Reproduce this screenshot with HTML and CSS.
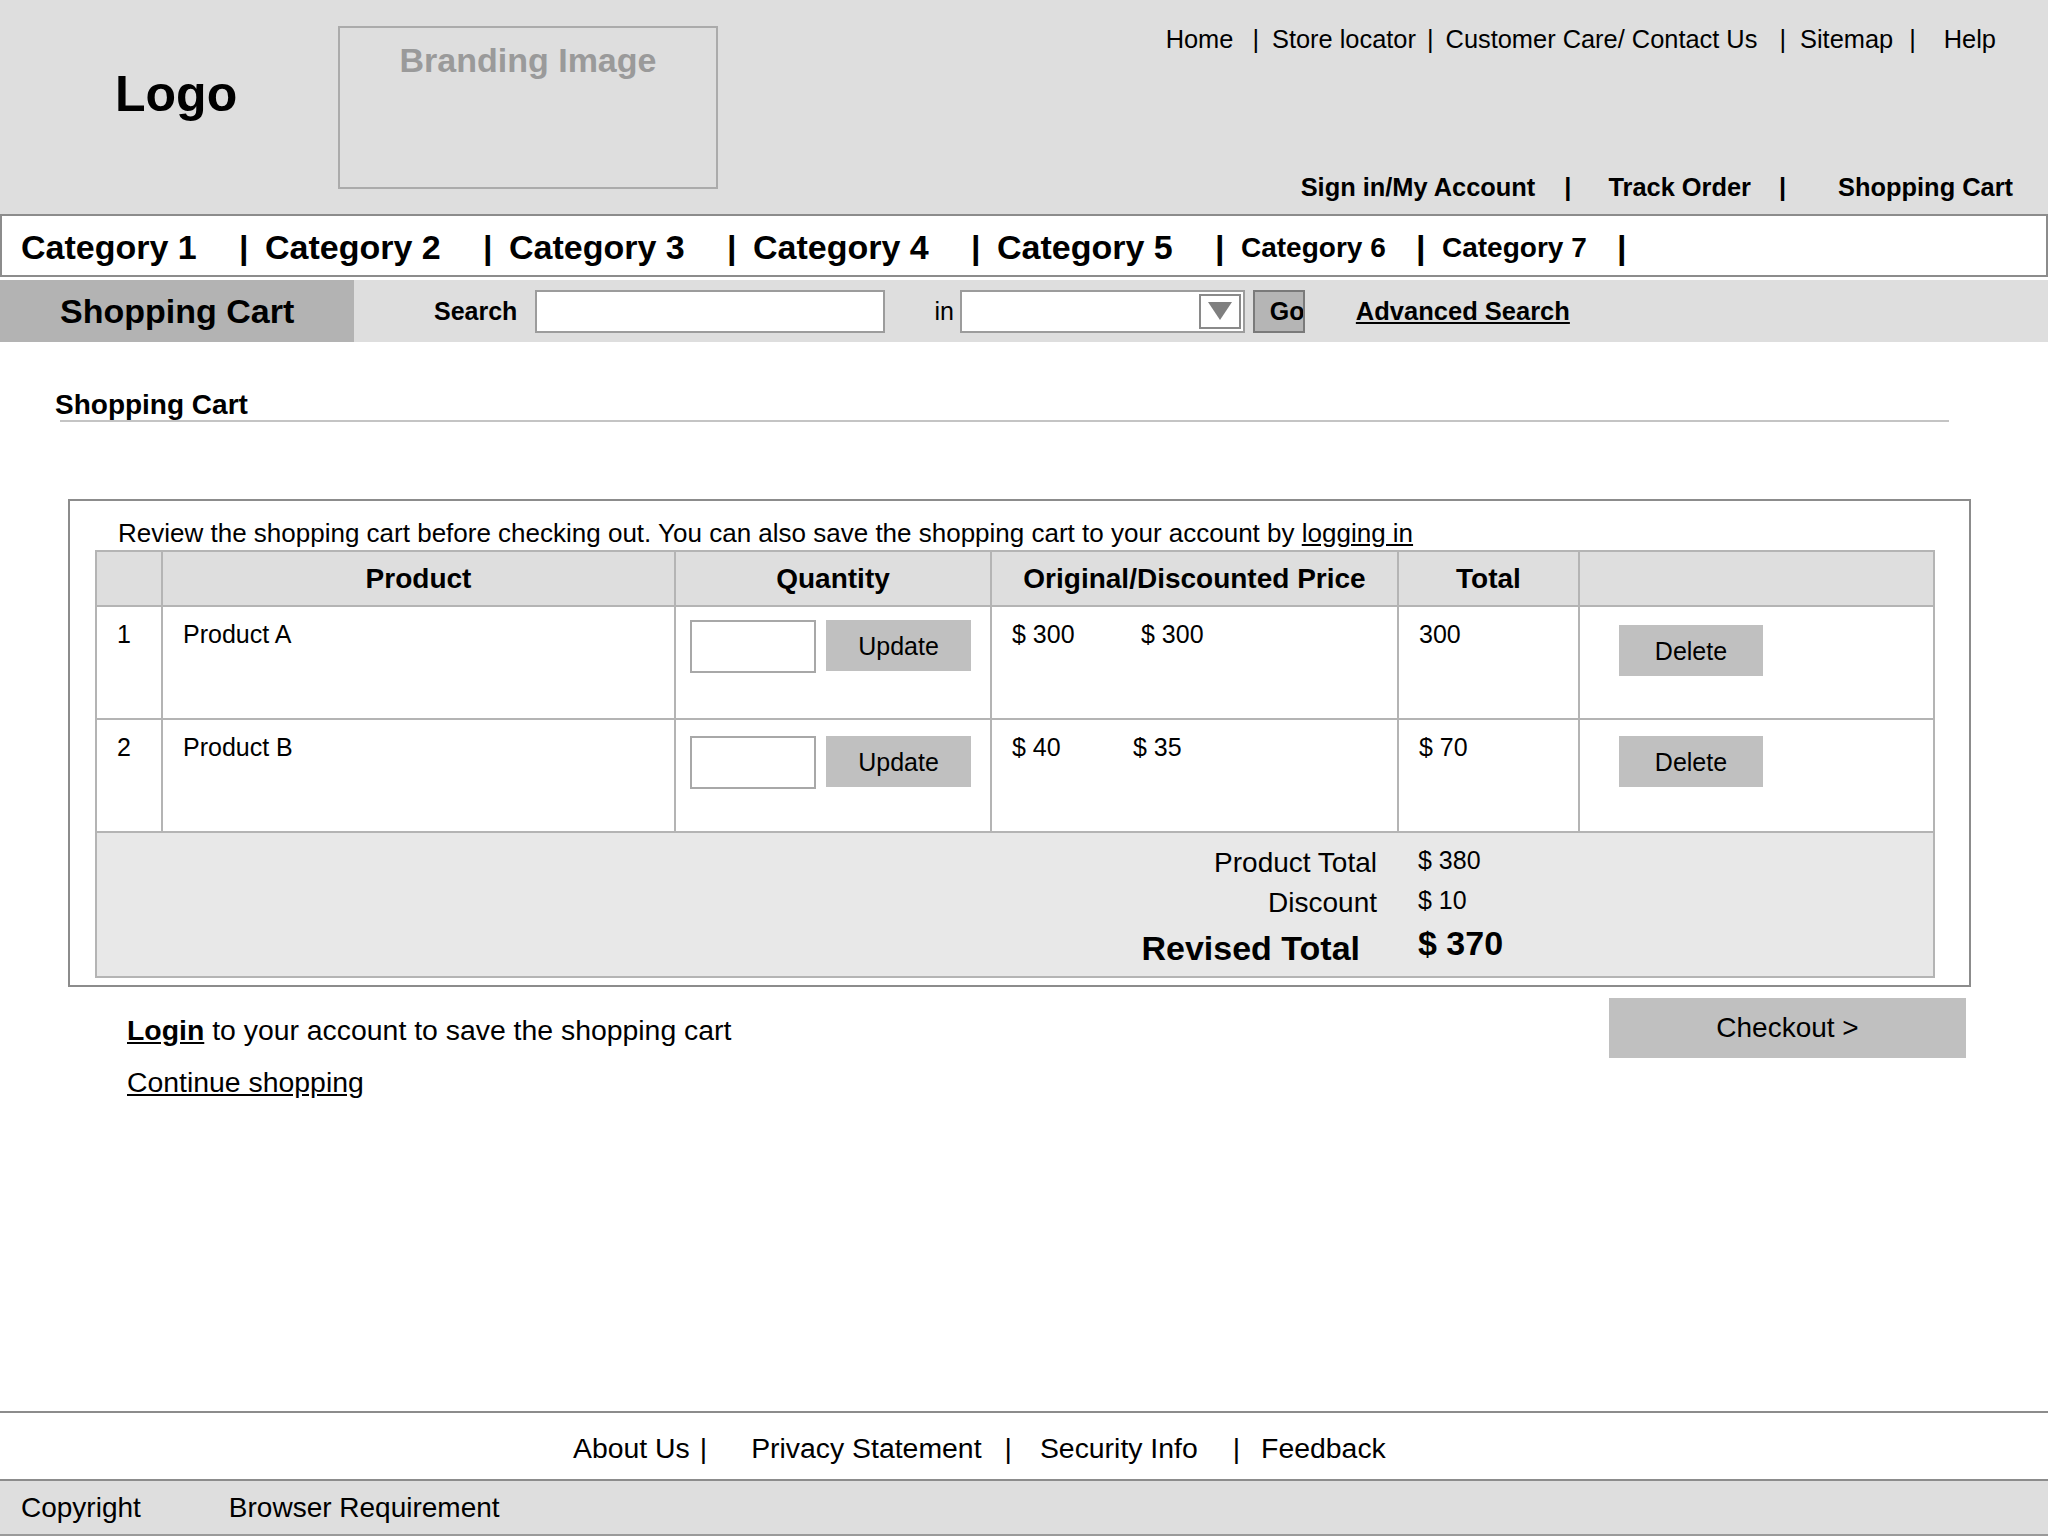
FILE: index.html
```html
<!DOCTYPE html>
<html lang="en">
<head>
<meta charset="utf-8">
<title>Shopping Cart</title>
<link rel="stylesheet" href="styles.css">
</head>
<body>
<div class="page">
  <header class="header">
    <div class="logo">Logo</div>
    <div class="brand">Branding Image</div>
    <div class="util">
      <nav class="toplinks">
        <a href="#">Home</a><span class="sep s1">|</span><a href="#">Store locator</a><span class="sep s2">|</span><a href="#">Customer Care/ Contact Us</a><span class="sep s3">|</span><a href="#">Sitemap</a><span class="sep s4">|</span><a href="#">Help</a>
      </nav>
      <nav class="acctlinks">
        <a href="#">Sign in/My Account</a><span class="asep">|</span><a href="#">Track Order</a><span class="asep last">|</span><a href="#">Shopping Cart</a>
      </nav>
    </div>
  </header>

  <nav class="cats">
    <a href="#" class="cat">Category 1</a><span class="csep">|</span>
    <a href="#" class="cat">Category 2</a><span class="csep">|</span>
    <a href="#" class="cat">Category 3</a><span class="csep">|</span>
    <a href="#" class="cat">Category 4</a><span class="csep">|</span>
    <a href="#" class="cat">Category 5</a><span class="csep">|</span>
    <a href="#" class="cat sm">Category 6</a><span class="csep">|</span>
    <a href="#" class="cat sm">Category 7</a><span class="csep">|</span>
  </nav>

  <div class="searchbar">
    <div class="tab">Shopping Cart</div>
    <span class="slabel">Search</span>
    <div class="sinput"></div>
    <span class="in">in</span>
    <div class="select">
      <span class="arrow"><svg width="26" height="20" viewBox="0 0 26 20"><polygon points="1,1 25,1 13,19" fill="#7f7f7f"/></svg></span>
    </div>
    <div class="go">Go</div>
    <a href="#" class="adv">Advanced Search</a>
  </div>

  <main class="content">
    <h2 class="title">Shopping Cart</h2>
    <div class="rule"></div>

    <section class="cartbox">
      <p class="intro">Review the shopping cart before checking out. You can also save the shopping cart to your account by <a href="#">logging in</a></p>
      <table class="cart">
        <colgroup>
          <col class="c0"><col class="c1"><col class="c2"><col class="c3"><col class="c4"><col class="c5">
        </colgroup>
        <thead>
          <tr>
            <th></th>
            <th>Product</th>
            <th>Quantity</th>
            <th>Original/Discounted Price</th>
            <th>Total</th>
            <th></th>
          </tr>
        </thead>
        <tbody>
          <tr class="item">
            <td>1</td>
            <td>Product A</td>
            <td class="qty"><div class="qtywrap"><div class="qinput"></div><div class="btn upd">Update</div></div></td>
            <td><span class="p1">$ 300</span><span>$ 300</span></td>
            <td>300</td>
            <td class="del"><div class="btn delbtn">Delete</div></td>
          </tr>
          <tr class="item second">
            <td>2</td>
            <td>Product B</td>
            <td class="qty"><div class="qtywrap"><div class="qinput"></div><div class="btn upd">Update</div></div></td>
            <td><span class="p1 short">$ 40</span><span>$ 35</span></td>
            <td>$ 70</td>
            <td class="del"><div class="btn delbtn">Delete</div></td>
          </tr>
          <tr class="sumrow">
            <td colspan="6">
              <div class="summary">
                <div class="lbl">Product Total</div><div class="val">$ 380</div>
                <div class="lbl">Discount</div><div class="val">$ 10</div>
                <div class="lbl big">Revised Total</div><div class="val big">$ 370</div>
              </div>
            </td>
          </tr>
        </tbody>
      </table>
    </section>

    <div class="below">
      <div class="below-left">
        <p class="line"><a href="#" class="login">Login</a> to your account to save the shopping cart</p>
        <p class="line second"><a href="#">Continue shopping</a></p>
      </div>
      <div class="checkout">Checkout &gt;</div>
    </div>
  </main>

  <footer class="footer">
    <div class="flinks">
      <a href="#">About Us</a><span class="fs1">|</span><a href="#">Privacy Statement</a><span class="fs2">|</span><a href="#">Security Info</a><span class="fs3">|</span><a href="#">Feedback</a>
    </div>
    <div class="fbar">
      <span>Copyright</span><span class="breq">Browser Requirement</span>
    </div>
  </footer>
</div>
</body>
</html>
```

FILE: styles.css
```css
* { box-sizing: border-box; }

body {
  margin: 0;
  font-family: "Liberation Sans", Arial, sans-serif;
  color: #000;
  background: #fff;
}

a { color: #000; }

.page {
  display: flex;
  flex-direction: column;
  min-height: 1536px;
}

/* Header */
.header {
  display: flex;
  height: 214px;
  background: #dedede;
}

.logo {
  width: 338px;
  padding: 68px 0 0 115px;
  font-size: 50px;
  font-weight: bold;
  line-height: 52px;
}

.brand {
  margin-top: 26px;
  width: 380px;
  height: 163px;
  border: 2px solid #ababab;
  color: #9a9a9a;
  font-size: 34px;
  font-weight: bold;
  line-height: 40px;
  text-align: center;
  padding-top: 12px;
}

.util {
  flex: 1;
  display: flex;
  flex-direction: column;
  align-items: flex-end;
}

.toplinks {
  display: flex;
  padding: 24px 52px 0 0;
  font-size: 25.4px;
  line-height: 30px;
}

.toplinks a { text-decoration: none; }

.sep { margin: 0 13px; }
.sep.s1 { margin: 0 13px 0 19px; }
.sep.s2 { margin: 0 12px 0 11px; }
.sep.s3 { margin: 0 14px 0 22px; }
.sep.s4 { margin: 0 28px 0 16px; }

.acctlinks {
  display: flex;
  margin-top: auto;
  padding: 0 35px 12px 0;
  font-size: 25.4px;
  font-weight: bold;
  line-height: 30px;
}

.acctlinks a { text-decoration: none; }

.asep { margin: 0 37px 0 29px; }
.asep.last { margin: 0 52px 0 28px; }

/* Category nav */
.cats {
  display: flex;
  align-items: center;
  height: 63px;
  border: 2px solid #8c8c8c;
  padding: 4px 0 0 19px;
  margin-bottom: 3px;
  font-weight: bold;
  background: #fff;
}

.cat {
  width: 218px;
  font-size: 34px;
  text-decoration: none;
}

.cat.sm {
  width: 175px;
  font-size: 28px;
}

.csep {
  width: 26px;
  font-size: 34px;
}

/* Search bar */
.searchbar {
  display: flex;
  align-items: center;
  height: 62px;
  background: #dedede;
  font-size: 25px;
}

.tab {
  width: 354px;
  align-self: stretch;
  display: flex;
  align-items: center;
  padding-left: 60px;
  background: #b3b3b3;
  font-size: 34px;
  font-weight: bold;
}

.slabel {
  margin-left: 80px;
  font-weight: bold;
}

.sinput {
  margin-left: 18px;
  width: 350px;
  height: 43px;
  background: #fff;
  border: 2px solid #9c9c9c;
}

.in { margin-left: 49px; }

.select {
  margin-left: 6px;
  width: 285px;
  height: 43px;
  background: #fff;
  border: 2px solid #9c9c9c;
  display: flex;
  justify-content: flex-end;
  align-items: center;
  padding-right: 2px;
}

.arrow {
  width: 42px;
  height: 35px;
  border: 2px solid #8a8a8a;
  display: flex;
  align-items: center;
  justify-content: center;
  background: #fff;
}

.go {
  margin-left: 8px;
  width: 52px;
  height: 43px;
  background: #b5b5b5;
  border: 2px solid #7a7a7a;
  overflow: hidden;
  white-space: nowrap;
  padding-left: 15px;
  font-weight: bold;
  line-height: 39px;
}

.adv {
  margin-left: 51px;
  font-size: 25.5px;
  font-weight: bold;
}

/* Content */
.title {
  margin: 48px 0 0 55px;
  font-size: 28px;
  font-weight: bold;
  line-height: 30px;
}

.rule {
  margin-left: 60px;
  width: 1889px;
  height: 2px;
  background: #c4c4c4;
}

.cartbox {
  margin: 77px 0 0 68px;
  width: 1903px;
  border: 2px solid #8c8c8c;
  padding: 17px 36px 7px 25px;
}

.intro {
  margin: 0 0 2px 23px;
  font-size: 26px;
  line-height: 30px;
}

.cart {
  border-collapse: collapse;
  table-layout: fixed;
  width: 1838px;
}

.c0 { width: 66px; }
.c1 { width: 513px; }
.c2 { width: 316px; }
.c3 { width: 407px; }
.c4 { width: 181px; }
.c5 { width: 355px; }

.cart th {
  height: 55px;
  padding: 0;
  background: #dedede;
  border: 2px solid #b4b4b4;
  font-size: 28px;
  font-weight: bold;
  text-align: center;
}

.cart td {
  border: 2px solid #b4b4b4;
  vertical-align: top;
  padding: 12px 0 0 20px;
  font-size: 25px;
  line-height: 30px;
}

.cart tr.item td { height: 113px; }

.cart td.qty { padding: 13px 0 0 14px; }
.cart tr.second td.qty { padding-top: 16px; }

.qtywrap {
  display: flex;
  gap: 10px;
}

.qinput {
  width: 126px;
  height: 53px;
  background: #fff;
  border: 2px solid #a8a8a8;
}

.btn {
  display: flex;
  align-items: center;
  justify-content: center;
  background: #c0c0c0;
  font-size: 25px;
}

.upd {
  width: 145px;
  height: 51px;
}

.cart td.del { padding: 18px 0 0 39px; }
.cart tr.second td.del { padding-top: 16px; }

.delbtn {
  width: 144px;
  height: 51px;
}

.p1 {
  display: inline-block;
  width: 129px;
}

.p1.short { width: 121px; }

.cart tr.sumrow td {
  height: 145px;
  padding: 10px 0 0 0;
  background: #e8e8e8;
}

.summary {
  display: grid;
  grid-template-columns: 1280px auto;
  grid-template-rows: 40px 40px 50px;
  column-gap: 41px;
  align-items: start;
}

.lbl {
  text-align: right;
  font-size: 28px;
  line-height: 40px;
}

.val {
  font-size: 25px;
  line-height: 34px;
}

.lbl.big {
  font-size: 34px;
  font-weight: bold;
  line-height: 50px;
  padding-right: 17px;
}

.val.big {
  font-size: 34px;
  font-weight: bold;
  line-height: 40px;
}

/* Below box */
.below {
  display: flex;
  margin-top: 11px;
}

.below-left {
  margin-left: 127px;
  padding-top: 15px;
  font-size: 28.4px;
  line-height: 34px;
}

.line { margin: 0; }
.line.second { margin-top: 18px; }

.login { font-weight: bold; }

.checkout {
  margin-left: auto;
  margin-right: 82px;
  width: 357px;
  height: 60px;
  display: flex;
  align-items: center;
  justify-content: center;
  background: #c0c0c0;
  font-size: 28px;
}

/* Footer */
.footer {
  margin-top: auto;
  border-top: 2px solid #8c8c8c;
}

.flinks {
  height: 66px;
  display: flex;
  align-items: center;
  padding: 5px 0 0 573px;
  font-size: 28.4px;
}

.flinks a { text-decoration: none; }

.fs1 { margin: 0 44px 0 10px; }
.fs2 { margin: 0 28px 0 23px; }
.fs3 { margin: 0 21px 0 35px; }

.fbar {
  height: 57px;
  display: flex;
  align-items: center;
  padding-left: 21px;
  background: #dedede;
  border-top: 2px solid #8c8c8c;
  border-bottom: 2px solid #9a9a9a;
  font-size: 28px;
}

.breq { margin-left: 88px; }
```
